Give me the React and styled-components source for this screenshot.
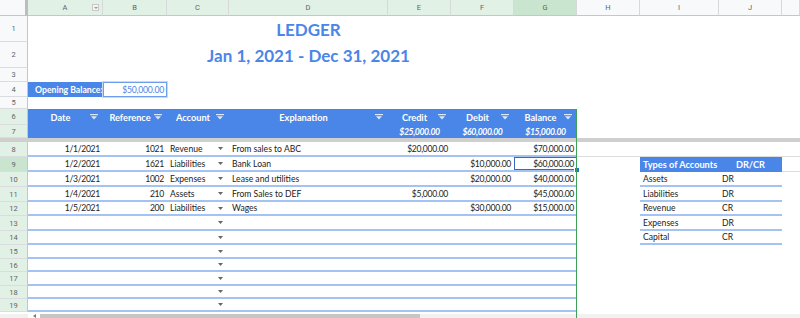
import React from 'react';
import styled, { createGlobalStyle, css } from 'styled-components';

const BLUE = '#4a86e8';
const LINE = '#a4c2f4';
const FONT = "Lato, 'Noto Sans', sans-serif";
const UI_FONT = "Roboto, 'Liberation Sans', sans-serif";

const GlobalStyle = createGlobalStyle`
  html, body { margin: 0; padding: 0; background: #fff; overflow: hidden; }
  body { font-family: ${FONT}; }
`;

const W = { A: 75, B: 64, C: 62, D: 159, E: 63, F: 63, G: 63, H: 63, I: 79, J: 63, K: 18 };
const COL_KEYS = ['A', 'B', 'C', 'D', 'E', 'F', 'G', 'H', 'I', 'J', 'K'];
const COL_TONE = { A: 'range', B: 'range', C: 'range', D: 'range', E: 'range', F: 'range', G: 'active' };

const toneBg = { plain: '#f8f9fa', range: '#e2f1e5', active: '#c9e5d0' };

const Sheet = styled.div`
  position: relative;
  width: 800px;
  height: 318px;
  overflow: hidden;
  display: flex;
  flex-direction: column;
  background: #fff;
`;

const HeadRow = styled.div`
  display: flex;
  height: 16px;
  flex: none;
`;

const Corner = styled.div`
  width: 28px;
  flex: none;
  box-sizing: border-box;
  background: #f8f9fa;
  border-bottom: 1px solid #c4c7c5;
  border-right: 3px solid #bdbdbd;
`;

const ColHead = styled.div`
  width: ${(p) => p.$w}px;
  flex: none;
  box-sizing: border-box;
  position: relative;
  display: flex;
  align-items: center;
  justify-content: center;
  background: ${(p) => toneBg[p.$tone || 'plain']};
  border-right: 1px solid #d6d8da;
  border-bottom: 1px solid #c4c7c5;
  font: 7.5px ${UI_FONT};
  color: #5f6368;
`;

const ColMenu = styled.span`
  position: absolute;
  right: 3px;
  top: 4px;
  width: 7px;
  height: 7px;
  box-sizing: border-box;
  border: 1px solid #c8c8c8;
  background: #f4f4f4;
  display: flex;
  align-items: center;
  justify-content: center;
  &::after {
    content: '';
    border-left: 2px solid transparent;
    border-right: 2px solid transparent;
    border-top: 2px solid #9a9a9a;
  }
`;

const GridRow = styled.div`
  display: flex;
  height: ${(p) => p.$h}px;
  flex: none;
`;

const RowHead = styled.div`
  width: 28px;
  flex: none;
  box-sizing: border-box;
  display: flex;
  align-items: center;
  justify-content: center;
  background: ${(p) => toneBg[p.$tone || 'plain']};
  border-right: 1px solid #c4c7c5;
  border-bottom: 1px solid #dadce0;
  font: 7.5px ${UI_FONT};
  color: #5f6368;
`;

const Cell = styled.div`
  width: ${(p) => (p.$w ? `${p.$w}px` : 'auto')};
  flex: ${(p) => (p.$w ? 'none' : '1')};
  box-sizing: border-box;
  position: relative;
  display: flex;
  align-items: ${(p) => (p.$bottom ? 'flex-end' : 'center')};
  justify-content: ${(p) => p.$justify || 'flex-start'};
  padding: 0 3px;
  white-space: nowrap;
  font-size: 8.6px;
  color: #222;
  letter-spacing: ${(p) => (p.$num ? '-0.3px' : '0')};
  background: ${(p) => p.$fill || 'transparent'};
  border-bottom: ${(p) =>
    p.$line === 'blue' ? `2px solid ${LINE}` : p.$line === 'gray' ? '1px solid #dcdcdc' : 'none'};
  ${(p) =>
    p.$active &&
    css`
      box-shadow: inset 0 0 0 1px #3a66c4;
      &::after {
        content: '';
        position: absolute;
        right: -3px;
        bottom: -3px;
        width: 4px;
        height: 4px;
        background: #1a73e8;
        border: 1px solid #fff;
      }
    `}
  ${(p) =>
    p.$boxed &&
    css`
      box-shadow: inset 0 0 0 1px #6d9eeb, 0 0 0 1px #c9daf8;
    `}
`;

const Title = styled.span`
  font-size: 17px;
  font-weight: 700;
  color: ${BLUE};
  line-height: 20px;
  padding-bottom: 2px;
`;

const LabelText = styled.span`
  font-size: 8.7px;
  font-weight: 700;
  color: #fff;
  padding-left: 4px;
`;

const BalanceText = styled.span`
  font-size: 8.7px;
  color: ${BLUE};
  letter-spacing: -0.25px;
`;

const HeadLabel = styled.span`
  flex: 1;
  text-align: center;
  font-size: 9.2px;
  font-weight: 700;
  color: #fff;
`;

const TotalText = styled.span`
  font-size: 8.7px;
  font-weight: 700;
  font-style: italic;
  color: #fff;
  letter-spacing: -0.4px;
`;

const SideHead = styled.span`
  font-size: 9.2px;
  font-weight: 700;
  color: #fff;
`;

const FilterSvg = styled.svg`
  flex: none;
  margin-right: 2px;
  color: #dce7fb;
`;

const ArrowSvg = styled.svg`
  flex: none;
  margin-left: auto;
  margin-right: 3px;
  color: #666;
`;

const Divider = styled.div`
  height: 4px;
  flex: none;
  background: #cfcfcf;
`;

const ScrollRow = styled.div`
  height: 6px;
  flex: none;
  display: flex;
  align-items: flex-end;
`;

const ScrollCorner = styled.div`
  width: 28px;
  height: 4px;
  background: #f1f1f1;
`;

const ScrollArrow = styled.div`
  width: 12px;
  height: 4px;
  display: flex;
  justify-content: center;
  align-items: center;
  &::before {
    content: '';
    border-top: 2px solid transparent;
    border-bottom: 2px solid transparent;
    border-right: 3px solid #777;
  }
`;

const ScrollThumb = styled.div`
  width: 380px;
  height: 4px;
  background: #c6c6c6;
`;

const ScrollTrack = styled.div`
  flex: 1;
  height: 4px;
  background: #f1f1f1;
`;

const RangeOutline = styled.div`
  position: absolute;
  left: 28px;
  top: 109px;
  width: 549px;
  height: 220px;
  box-sizing: border-box;
  border: 1px solid #3ea15a;
  border-left-color: transparent;
  pointer-events: none;
`;

const Filter = () => (
  <FilterSvg width="8" height="6" viewBox="0 0 8 6">
    <rect x="0" y="0" width="8" height="1.2" fill="currentColor" />
    <path d="M1 2.3h6L4 5.6z" fill="currentColor" />
  </FilterSvg>
);

const DropArrow = () => (
  <ArrowSvg width="5" height="3" viewBox="0 0 5 3">
    <path d="M0 0h5L2.5 3z" fill="currentColor" />
  </ArrowSvg>
);

const sum = (...keys) => keys.reduce((a, k) => a + W[k], 0);

const ROW_H = { 8: 15, 9: 15, 10: 15, 11: 15, 12: 14, 13: 15, 14: 14, 15: 14, 16: 13, 17: 14, 18: 13, 19: 13 };

const LEDGER = {
  8: ['1/1/2021', '1021', 'Revenue', 'From sales to ABC', '$20,000.00', '', '$70,000.00'],
  9: ['1/2/2021', '1621', 'Liabilities', 'Bank Loan', '', '$10,000.00', '$60,000.00'],
  10: ['1/3/2021', '1002', 'Expenses', 'Lease and utilities', '', '$20,000.00', '$40,000.00'],
  11: ['1/4/2021', '210', 'Assets', 'From Sales to DEF', '$5,000.00', '', '$45,000.00'],
  12: ['1/5/2021', '200', 'Liabilities', 'Wages', '', '$30,000.00', '$15,000.00'],
};

const SIDE = {
  10: ['Assets', 'DR'],
  11: ['Liabilities', 'DR'],
  12: ['Revenue', 'CR'],
  13: ['Expenses', 'DR'],
  14: ['Capital', 'CR'],
};

const HEADERS = [
  ['A', 'Date'],
  ['B', 'Reference'],
  ['C', 'Account'],
  ['D', 'Explanation'],
  ['E', 'Credit'],
  ['F', 'Debit'],
  ['G', 'Balance'],
];

function BodyRow({ n }) {
  const e = LEDGER[n] || ['', '', '', '', '', '', ''];
  const side = SIDE[n];
  return (
    <GridRow $h={ROW_H[n]}>
      <RowHead $tone={n === 9 ? 'active' : 'range'}>{n}</RowHead>
      <Cell $w={W.A} $line="blue" $justify="flex-end" $num>{e[0]}</Cell>
      <Cell $w={W.B} $line="blue" $justify="flex-end" $num>{e[1]}</Cell>
      <Cell $w={W.C} $line="blue">
        {e[2]}
        <DropArrow />
      </Cell>
      <Cell $w={W.D} $line="blue">{e[3]}</Cell>
      <Cell $w={W.E} $line="blue" $justify="flex-end" $num>{e[4]}</Cell>
      <Cell $w={W.F} $line="blue" $justify="flex-end" $num>{e[5]}</Cell>
      <Cell $w={W.G} $line="blue" $justify="flex-end" $num $active={n === 9}>{e[6]}</Cell>
      <Cell $w={W.H} $line={n === 8 ? 'gray' : undefined} />
      {n === 9 ? (
        <>
          <Cell $w={W.I} $fill={BLUE}><SideHead>Types of Accounts</SideHead></Cell>
          <Cell $w={W.J} $fill={BLUE} $justify="center"><SideHead>DR/CR</SideHead></Cell>
        </>
      ) : side ? (
        <>
          <Cell $w={W.I} $line="blue">{side[0]}</Cell>
          <Cell $w={W.J} $line="blue">{side[1]}</Cell>
        </>
      ) : (
        <>
          <Cell $w={W.I} $line={n === 8 ? 'gray' : undefined} />
          <Cell $w={W.J} $line={n === 8 ? 'gray' : undefined} />
        </>
      )}
      <Cell $line={n === 8 || n === 9 ? 'gray' : undefined} />
    </GridRow>
  );
}

export default function App() {
  return (
    <>
      <GlobalStyle />
      <Sheet>
        <HeadRow>
          <Corner />
          {COL_KEYS.map((k) => (
            <ColHead key={k} $w={W[k]} $tone={COL_TONE[k]}>
              {k === 'K' ? '' : k}
              {k === 'A' && <ColMenu />}
            </ColHead>
          ))}
        </HeadRow>

        <GridRow $h={26}>
          <RowHead>1</RowHead>
          <Cell $w={sum('A', 'B', 'C')} />
          <Cell $w={W.D} $justify="center" $bottom>
            <Title>LEDGER</Title>
          </Cell>
          <Cell />
        </GridRow>

        <GridRow $h={26}>
          <RowHead>2</RowHead>
          <Cell $w={sum('A', 'B', 'C')} />
          <Cell $w={W.D} $justify="center" $bottom>
            <Title>Jan 1, 2021 - Dec 31, 2021</Title>
          </Cell>
          <Cell />
        </GridRow>

        <GridRow $h={14}>
          <RowHead>3</RowHead>
          <Cell />
        </GridRow>

        <GridRow $h={15}>
          <RowHead>4</RowHead>
          <Cell $w={W.A} $fill={BLUE}>
            <LabelText>Opening Balance:</LabelText>
          </Cell>
          <Cell $w={W.B} $justify="flex-end" $boxed>
            <BalanceText>$50,000.00</BalanceText>
          </Cell>
          <Cell />
        </GridRow>

        <GridRow $h={12}>
          <RowHead>5</RowHead>
          <Cell />
        </GridRow>

        <GridRow $h={16}>
          <RowHead $tone="range">6</RowHead>
          {HEADERS.map(([k, label]) => (
            <Cell key={k} $w={W[k]} $fill={BLUE}>
              <HeadLabel>{label}</HeadLabel>
              <Filter />
            </Cell>
          ))}
          <Cell />
        </GridRow>

        <GridRow $h={13}>
          <RowHead $tone="range">7</RowHead>
          <Cell $w={sum('A', 'B', 'C', 'D')} $fill={BLUE} />
          <Cell $w={W.E} $fill={BLUE} $justify="center"><TotalText>$25,000.00</TotalText></Cell>
          <Cell $w={W.F} $fill={BLUE} $justify="center"><TotalText>$60,000.00</TotalText></Cell>
          <Cell $w={W.G} $fill={BLUE} $justify="center"><TotalText>$15,000.00</TotalText></Cell>
          <Cell />
        </GridRow>

        <Divider />

        {[8, 9, 10, 11, 12, 13, 14, 15, 16, 17, 18, 19].map((n) => (
          <BodyRow key={n} n={n} />
        ))}

        <ScrollRow>
          <ScrollCorner />
          <ScrollArrow />
          <ScrollThumb />
          <ScrollTrack />
        </ScrollRow>

        <RangeOutline />
      </Sheet>
    </>
  );
}
